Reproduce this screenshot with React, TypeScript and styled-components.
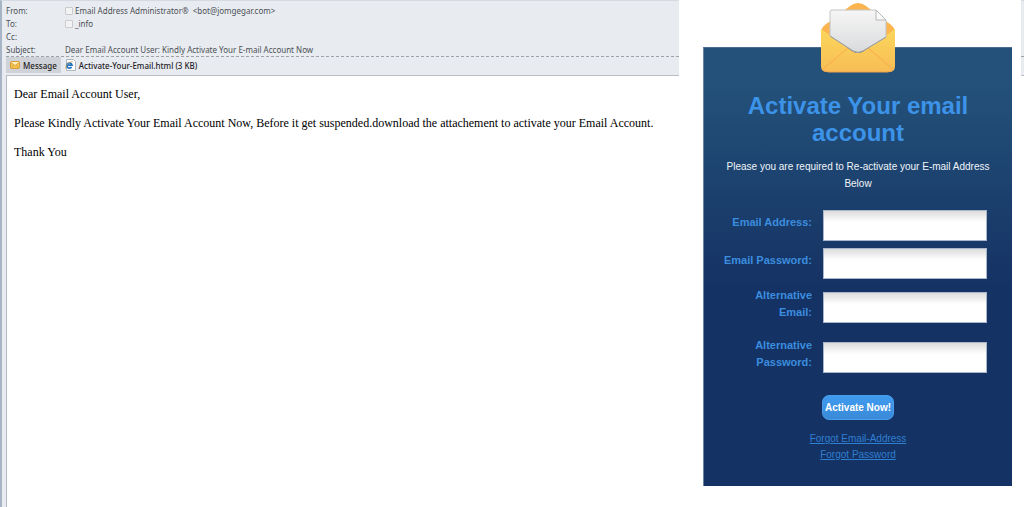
import React from "react";
import styled, { createGlobalStyle } from "styled-components";

const GlobalStyle = createGlobalStyle`
  *, *::before, *::after { box-sizing: border-box; }
  html, body, #root { height: 100%; }
  body { margin: 0; background: #fff; }
`;

const Page = styled.div`
  position: relative;
  min-height: 100%;
  display: flex;
  background: #fff;
  overflow: hidden;
`;

const MailWindow = styled.main`
  flex: 1;
  min-width: 0;
  display: flex;
  flex-direction: column;
  background: #e8ecf1;
  border-left: 2px solid #a6b4c6;
  border-top: 1px solid #d5dae2;
  padding-left: 4px;
  font-family: "Noto Sans", "Open Sans", sans-serif;
  font-size: 8px;
  color: #4c4f54;
`;

const Headers = styled.dl`
  margin: 0;
  padding-top: 3px;
  display: grid;
  grid-template-columns: 59px 1fr;
  grid-auto-rows: 13px;
  line-height: 13px;
  white-space: pre;
  border-bottom: 1px dashed #9da2a9;
`;

const Term = styled.dt``;

const Detail = styled.dd`
  margin: 0;
  display: flex;
  align-items: center;
  gap: 2px;
`;

const Presence = styled.span`
  width: 8px;
  height: 8px;
  border: 1px solid #c9cbce;
  border-radius: 1px;
  background: #f3f3f3;
`;

const Tabs = styled.div`
  height: 19px;
  display: flex;
  align-items: flex-start;
  border-bottom: 1px solid #b9bec6;
`;

const Tab = styled.button<{ $active?: boolean }>`
  height: 16px;
  display: flex;
  align-items: center;
  gap: 3px;
  padding: 0 4px;
  border: 0;
  background: ${(p) => (p.$active ? "#cfd2d6" : "transparent")};
  color: #1f2226;
  font: 500 8px/15px "Noto Sans", "Open Sans", sans-serif;
  white-space: nowrap;
`;

const Body = styled.article`
  flex: 1;
  background: #fff;
  border-left: 1px solid #b4bbc6;
  padding: 11px 7px;
  font: 12px/15px "Liberation Serif", "Times New Roman", serif;
  color: #000;
`;

const Paragraph = styled.p`
  margin: 0 0 14px;
  white-space: nowrap;
`;

const Overlay = styled.aside`
  position: absolute;
  top: 0;
  bottom: 0;
  right: 3px;
  width: 342px;
  padding: 3px 9px 21px 24px;
  background: #fff;
  display: flex;
  flex-direction: column;
  align-items: center;
  font-family: "Liberation Sans", Arial, sans-serif;
`;

const Envelope = styled.svg`
  display: block;
  flex: none;
  z-index: 1;
  margin-bottom: -26px;
`;

const Card = styled.form`
  align-self: stretch;
  flex: 1;
  display: flex;
  flex-direction: column;
  align-items: center;
  padding-top: 44px;
  border-top: 1px solid #4b6e90;
  border-left: 1px solid #6c84a3;
  background: linear-gradient(#235179 0, #235179 35px, #153264 240px, #153264 100%);
`;

const Title = styled.h1`
  margin: 0;
  width: 240px;
  text-align: center;
  font-size: 24px;
  line-height: 27px;
  font-weight: 700;
  color: #3c93e8;
`;

const Intro = styled.p`
  margin: 12px 0 14px;
  width: 280px;
  text-align: center;
  font-size: 10px;
  line-height: 17px;
  color: #f0f4f9;
`;

const Field = styled.div<{ $tall?: boolean }>`
  align-self: stretch;
  height: ${(p) => (p.$tall ? 50 : 38)}px;
  display: grid;
  grid-template-columns: 1fr 164px;
  column-gap: 11px;
  align-items: center;
  padding: 0 25px 0 16px;
`;

const Label = styled.label`
  padding-bottom: 6px;
  text-align: right;
  font-size: 11px;
  line-height: 17px;
  font-weight: 700;
  color: #3b8ddf;
`;

const Input = styled.input`
  width: 100%;
  height: 31px;
  padding: 0 8px;
  border: 1px solid #a9b6ca;
  border-radius: 0;
  outline: 0;
  background: linear-gradient(#dcdcdc, #fff 11px);
  font: 12px "Liberation Sans", Arial, sans-serif;
`;

const Submit = styled.button`
  margin: 13px 0 11px;
  height: 25px;
  padding: 0 2px;
  border: 1px solid #4a9cec;
  border-radius: 7px;
  background: linear-gradient(#3f9bf0, #3a8ad8);
  color: #fff;
  font: 700 10px/23px "Liberation Sans", Arial, sans-serif;
`;

const Link = styled.a`
  font-size: 10px;
  line-height: 16px;
  color: #2f7fd0;
  text-decoration: underline;
`;

const EnvelopeArt = () => (
  <Envelope width="76" height="70" viewBox="0 0 76 70" aria-hidden="true">
    <defs>
      <linearGradient id="front" x1="0" y1="0" x2="0" y2="1">
        <stop offset="0" stopColor="#fbd65c" />
        <stop offset="1" stopColor="#f8bd55" />
      </linearGradient>
      <linearGradient id="sheet" x1="0" y1="0" x2="0" y2="1">
        <stop offset="0" stopColor="#f6f6f6" />
        <stop offset="1" stopColor="#d9dadc" />
      </linearGradient>
    </defs>
    <path d="M1 28Q2 23 9 19L30 3Q38-3 46 3L67 19Q74 23 75 28L56 44H20Z" fill="#fbb44e" />
    <path d="M1 26L32 48Q38 52 44 48L75 26V63Q75 69 69 69H7Q1 69 1 63Z" fill="url(#front)" />
    <path d="M3 66L28 45M73 66L48 45" stroke="#fba94c" fill="none" />
    <path d="M3 67Q6 69 9 69H67Q70 69 73 67" stroke="#f2a14d" fill="none" />
    <path
      d="M12 7H56L66 17V34L43 48Q38 51 33 48L10 33V9Q10 7 12 7Z"
      fill="url(#sheet)"
      stroke="#c3c4c6"
    />
    <path d="M10 33L33 48Q38 51 43 48L66 34" fill="none" stroke="#9a9a98" />
    <path d="M56 7V17H66Z" fill="#fafafa" stroke="#b5b6b8" />
  </Envelope>
);

const MessageIcon = () => (
  <svg width="10" height="8" viewBox="0 0 10 8" aria-hidden="true">
    <rect x="0.5" y="0.5" width="9" height="7" rx="1" fill="#f4c553" stroke="#d79b33" />
    <path d="M1 1H9L5 4.5Z" fill="#fff0bc" />
    <path d="M1 1.5L5 4.5L9 1.5M1 7L4 4M9 7L6 4" fill="none" stroke="#d79b33" strokeWidth="0.7" />
  </svg>
);

const HtmlIcon = () => (
  <svg width="11" height="12" viewBox="0 0 11 12" aria-hidden="true">
    <path d="M1.5 0.5H8.5L10.5 2.5V11.5H1.5Z" fill="#fff" stroke="#b3b7bc" />
    <path d="M6.6 8A2.6 2.6 0 1 1 7 6.2H2" fill="none" stroke="#1f74c4" strokeWidth="1.7" />
    <path d="M0.6 9.6Q0 7 3 4.5T8 2.8" fill="none" stroke="#e3a93c" strokeWidth="0.7" />
  </svg>
);

const fields = [
  { id: "email", label: "Email Address:", type: "email" },
  { id: "password", label: "Email Password:", type: "password" },
  { id: "alt-email", label: "Alternative Email:", type: "email", tall: true },
  { id: "alt-password", label: "Alternative Password:", type: "password", tall: true },
];

export default function App() {
  return (
    <>
      <GlobalStyle />
      <Page>
        <MailWindow>
          <Headers>
            <Term>From:</Term>
            <Detail>
              <Presence />
              {"Email Address Administrator®  <bot@jomgegar.com>"}
            </Detail>
            <Term>To:</Term>
            <Detail>
              <Presence />
              _info
            </Detail>
            <Term>Cc:</Term>
            <Detail />
            <Term>Subject:</Term>
            <Detail>Dear Email Account User: Kindly Activate Your E-mail Account Now</Detail>
          </Headers>
          <Tabs>
            <Tab type="button" $active>
              <MessageIcon />
              Message
            </Tab>
            <Tab type="button">
              <HtmlIcon />
              Activate-Your-Email.html (3 KB)
            </Tab>
          </Tabs>
          <Body>
            <Paragraph>Dear Email Account User,</Paragraph>
            <Paragraph>
              Please Kindly Activate Your Email Account Now, Before it get suspended.download the
              attachement to activate your Email Account.
            </Paragraph>
            <Paragraph>Thank You</Paragraph>
          </Body>
        </MailWindow>
        <Overlay>
          <EnvelopeArt />
          <Card onSubmit={(e) => e.preventDefault()}>
            <Title>Activate Your email account</Title>
            <Intro>Please you are required to Re-activate your E-mail Address Below</Intro>
            {fields.map((f) => (
              <Field key={f.id} $tall={f.tall}>
                <Label htmlFor={f.id}>{f.label}</Label>
                <Input id={f.id} type={f.type} />
              </Field>
            ))}
            <Submit type="submit">Activate Now!</Submit>
            <Link href="#forgot-email">Forgot Email-Address</Link>
            <Link href="#forgot-password">Forgot Password</Link>
          </Card>
        </Overlay>
      </Page>
    </>
  );
}
